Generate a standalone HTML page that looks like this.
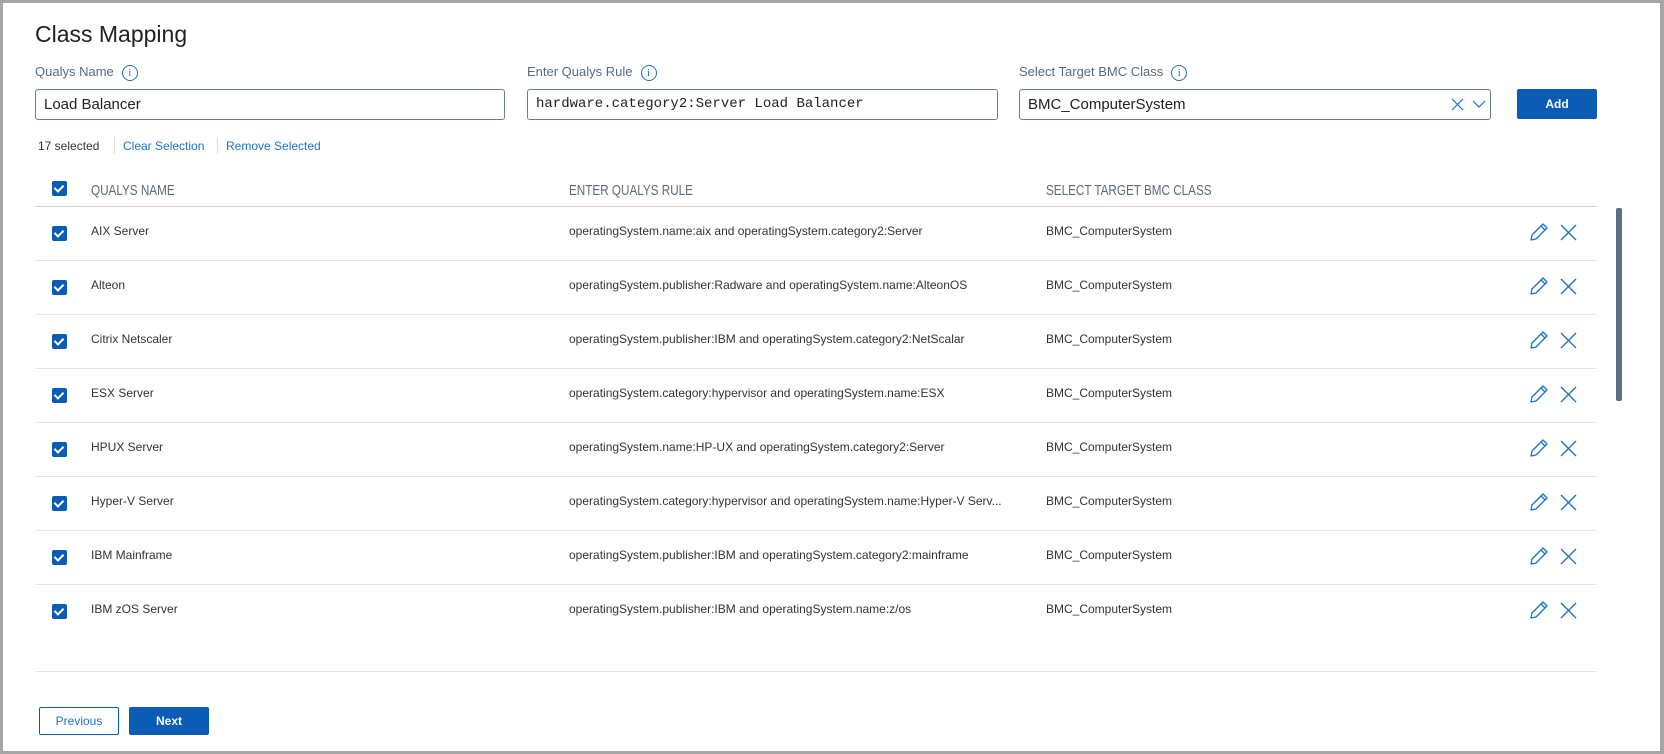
<!DOCTYPE html>
<html><head><meta charset="utf-8"><style>
*{box-sizing:border-box;margin:0;padding:0}
body{width:1664px;height:754px;background:#fff;font-family:"Liberation Sans",sans-serif;color:#333;position:relative;overflow:hidden}
.frame{position:absolute;left:0;top:0;width:1664px;height:754px;border:3px solid #a6a6a6;border-right-width:4px}
.abs{position:absolute}
h1{position:absolute;left:35px;top:21px;font-size:23px;font-weight:normal;color:#222}
.lbl{position:absolute;top:64px;font-size:13px;color:#5a6b7a}
.info{display:inline-block;width:16px;height:16px;border:1px solid #1a73c8;border-radius:50%;color:#1a73c8;font-size:11px;text-align:center;line-height:14px;margin-left:8px;vertical-align:0px;font-family:"Liberation Serif",serif}
.inp{position:absolute;top:89px;height:31px;border:1px solid #6a7d8c;border-radius:3px;font-size:15px;color:#222;padding-left:8px;line-height:29px}
.btn{position:absolute;background:#0b5cb5;color:#fff;font-weight:bold;font-size:12px;text-align:center;border-radius:2px}
.sel{position:absolute;top:139px;font-size:12px}
.cb{position:absolute;left:52px;width:15px;height:15px;background:#0b5cb5;border-radius:2px}
.cb:after{content:"";position:absolute;left:4px;top:2px;width:4px;height:7px;border:solid #fff;border-width:0 2px 2px 0;transform:rotate(45deg)}
.hd{position:absolute;top:182px;font-size:15px;color:#5a6b7a;font-family:"Liberation Sans Narrow","Liberation Sans",sans-serif;font-stretch:condensed;transform:scaleX(0.78);transform-origin:left}
.line{position:absolute;left:35px;width:1562px;height:1px;background:#e3e6e8}
.row{position:absolute;left:0;width:1600px;height:54px;font-size:12px;color:#333}
.row span{position:absolute;top:18px}
</style></head><body>
<div class="frame"></div>
<h1>Class Mapping</h1>
<div class="lbl" style="left:35px">Qualys Name<span class="info">i</span></div>
<div class="lbl" style="left:527px">Enter Qualys Rule<span class="info">i</span></div>
<div class="lbl" style="left:1019px">Select Target BMC Class<span class="info">i</span></div>
<div class="inp" style="left:35px;width:470px">Load Balancer</div>
<div class="inp" style="left:527px;width:471px;font-family:'Liberation Mono',monospace;font-size:14px">hardware.category2:Server Load Balancer</div>
<div class="inp" style="left:1019px;width:472px">BMC_ComputerSystem
<svg class="abs" style="left:431px;top:8px" width="36" height="14"><path d="M1 1l11 11M12 1L1 12" stroke="#1a73c8" stroke-width="1.2" fill="none"/><path d="M22 3l6 6 6-6" stroke="#1a73c8" stroke-width="1.2" fill="none"/></svg></div>
<div class="btn" style="left:1517px;top:89px;width:80px;height:30px;line-height:30px">Add</div>
<div class="sel" style="left:38px">17 selected</div>
<div class="abs" style="left:114px;top:137px;width:1px;height:17px;background:#ddd"></div>
<div class="sel" style="left:123px;color:#1a73c8">Clear Selection</div>
<div class="abs" style="left:217px;top:137px;width:1px;height:17px;background:#ddd"></div>
<div class="sel" style="left:226px;color:#1a73c8">Remove Selected</div>
<div class="cb" style="top:181px"></div>
<div class="hd" style="left:91px">QUALYS NAME</div>
<div class="hd" style="left:569px">ENTER QUALYS RULE</div>
<div class="hd" style="left:1046px">SELECT TARGET BMC CLASS</div>
<div class="line" style="top:206px;background:#cfd5da"></div>
<div class="abs" style="left:1616px;top:208px;width:6px;height:193px;background:#5a7280;border-radius:2px"></div>
<div class="line" style="top:671px"></div>
<div id="rows"></div>
<div class="btn" style="left:39px;top:707px;width:80px;height:28px;line-height:26px;background:#fff;color:#1a73c8;border:1px solid #0b5cb5;font-weight:normal">Previous</div>
<div class="btn" style="left:129px;top:707px;width:80px;height:28px;line-height:28px">Next</div>
<script>
var d=[["AIX Server","operatingSystem.name:aix and operatingSystem.category2:Server"],
["Alteon","operatingSystem.publisher:Radware and operatingSystem.name:AlteonOS"],
["Citrix Netscaler","operatingSystem.publisher:IBM and operatingSystem.category2:NetScalar"],
["ESX Server","operatingSystem.category:hypervisor and operatingSystem.name:ESX"],
["HPUX Server","operatingSystem.name:HP-UX and operatingSystem.category2:Server"],
["Hyper-V Server","operatingSystem.category:hypervisor and operatingSystem.name:Hyper-V Serv..."],
["IBM Mainframe","operatingSystem.publisher:IBM and operatingSystem.category2:mainframe"],
["IBM zOS Server","operatingSystem.publisher:IBM and operatingSystem.name:z/os"]];
var h="";
d.forEach(function(r,i){var t=206+i*54;
h+='<div class="row" style="top:'+t+'px"><div class="cb" style="top:20px"></div><span style="left:91px">'+r[0]+'</span><span style="left:569px">'+r[1]+'</span><span style="left:1046px">BMC_ComputerSystem</span>'+
'<svg class="abs" style="left:1528px;top:15px" width="52" height="22"><path d="M3 19l1-5L15 3l4 4L8 18z M13 5l4 4 M3 19l5-1" stroke="#1a73c8" stroke-width="1.3" fill="none" stroke-linejoin="round"/><path d="M33 4l15 15M48 4L33 19" stroke="#1a73c8" stroke-width="1.4"/></svg></div>';
if(i<7)h+='<div class="line" style="top:'+(t+54)+'px"></div>';});
document.getElementById("rows").innerHTML=h;
</script>
</body></html>
